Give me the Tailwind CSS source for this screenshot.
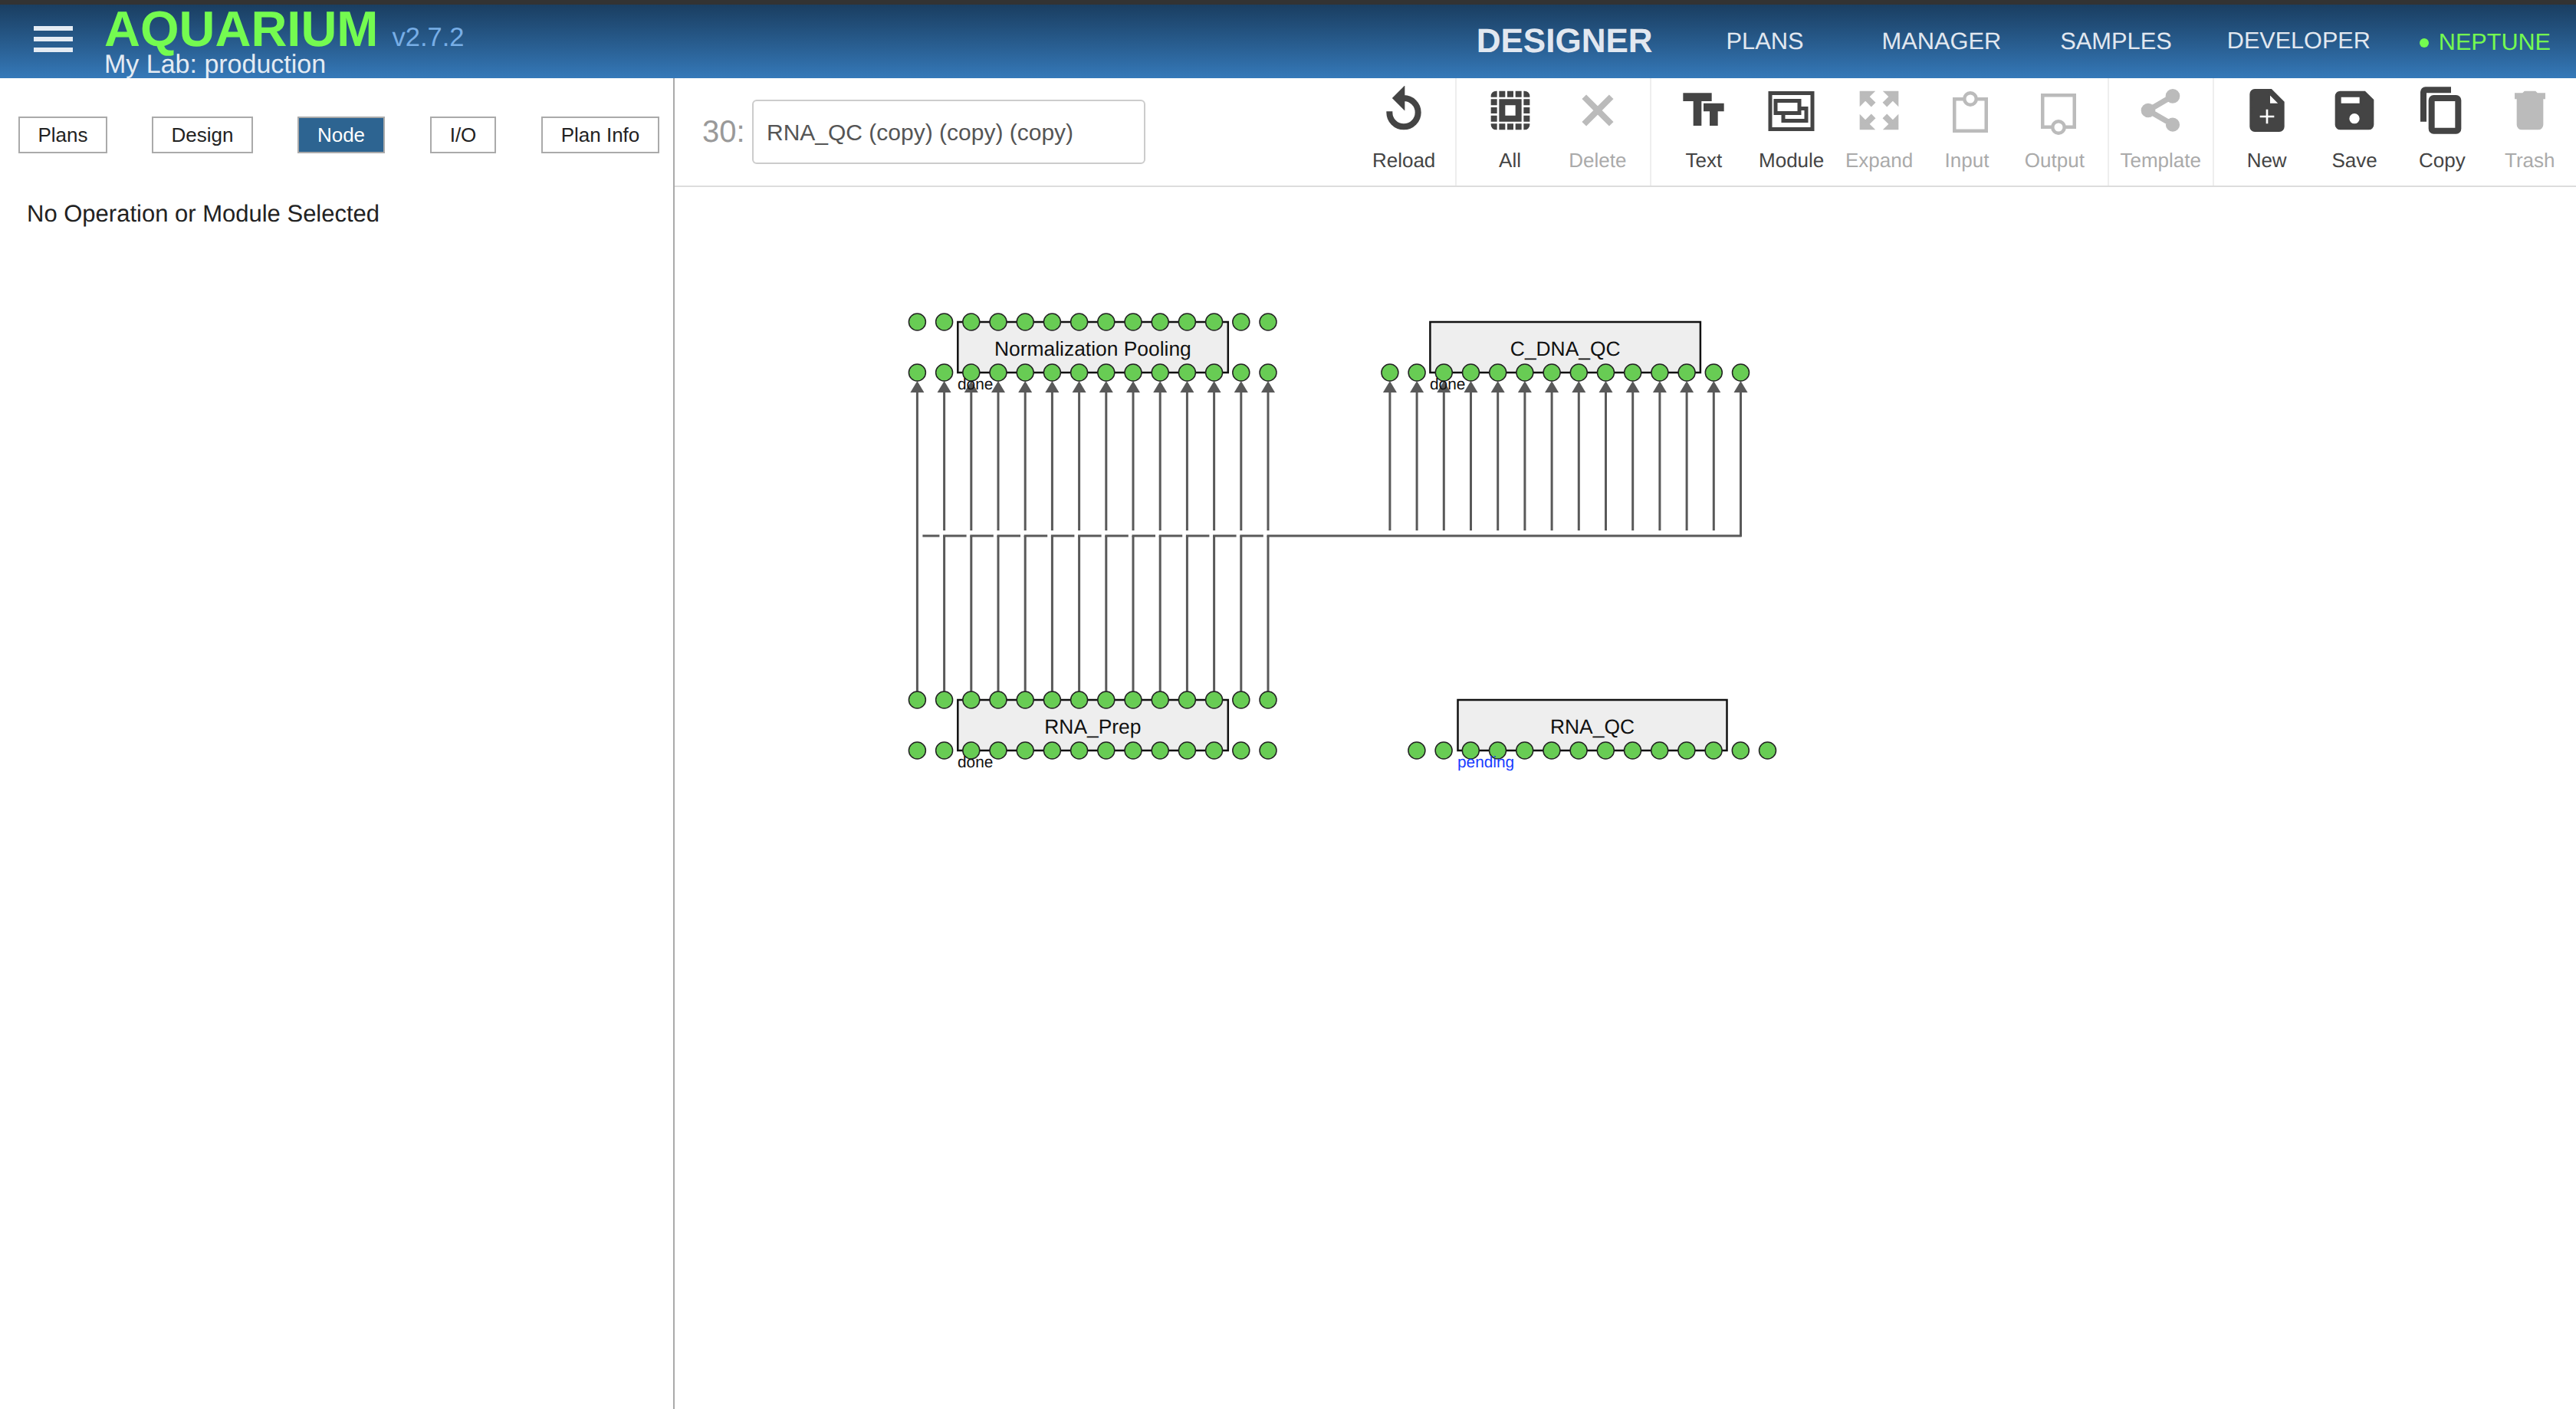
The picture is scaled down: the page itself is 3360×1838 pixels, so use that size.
<!DOCTYPE html>
<html lang="en">
<head>
    <meta charset="UTF-8">
    <meta name="viewport" content="width=device-width, initial-scale=1.0">
    <title>Aquarium - Designer</title>
    <script src="https://cdn.jsdelivr.net/npm/@tailwindcss/browser@4"></script>
</head>
<body class="bg-white h-screen overflow-hidden flex flex-col font-['Liberation_Sans',sans-serif] [text-rendering:geometricPrecision]">

    <!-- Top band -->
    <div class="h-[6px] bg-[#333333] shrink-0"></div>

    <!-- Navbar -->
    <nav class="h-[96px] shrink-0 flex items-center bg-linear-to-b from-[#1a3e61] to-[#3579b9] pr-[33px]">
        <div class="ml-[44px] w-[51px] flex flex-col gap-[8px] -mt-[6px]">
            <div class="h-[6px] bg-[#e4ebf3]"></div>
            <div class="h-[6px] bg-[#e4ebf3]"></div>
            <div class="h-[6px] bg-[#e4ebf3]"></div>
        </div>
        <div class="ml-[41px] flex flex-col -mt-[2px]">
            <div class="flex items-baseline h-[62px]">
                <span class="text-[65px] leading-[62px] font-bold text-[#74fb50]">AQUARIUM</span>
                <span class="ml-[18px] text-[34.5px] text-[#78aee6]">v2.7.2</span>
            </div>
            <div class="text-[34px] leading-[30px] text-[#e4ebf3]">My Lab: production</div>
        </div>
        <div class="ml-auto flex items-center text-[#e2e8f0]">
            <span class="text-[44px] font-bold">DESIGNER</span>
            <span class="ml-[96px] text-[30.8px]">PLANS</span>
            <span class="ml-[102px] text-[30.8px]">MANAGER</span>
            <span class="ml-[77px] text-[30.8px]">SAMPLES</span>
            <span class="ml-[72px] text-[30.6px]">DEVELOPER</span>
            <span class="ml-[64px] w-[12px] h-[12px] rounded-full bg-[#74fb50] mt-[3px]"></span>
            <span class="ml-[13px] text-[30.6px] text-[#74fb50] mt-[3px]">NEPTUNE</span>
        </div>
    </nav>

    <div class="flex-1 flex min-h-0">

        <!-- Left panel -->
        <div class="w-[880px] shrink-0 border-r-2 border-[#aaaaaa]">
            <div class="flex justify-between pl-[24px] pr-[18px] pt-[50px] text-[26px] text-[#222222]">
                <button class="w-[116px] h-[48px] border-2 border-[#aaaaaa] pt-[1px]">Plans</button>
                <button class="w-[132px] h-[48px] border-2 border-[#aaaaaa] pt-[1px] -ml-[1px]">Design</button>
                <button class="w-[114px] h-[48px] border-2 border-[#aaaaaa] pt-[1px] -ml-[1px] bg-[#2d6491] text-white">Node</button>
                <button class="w-[86px] h-[48px] border-2 border-[#aaaaaa] pt-[1px]">I/O</button>
                <button class="w-[154px] h-[48px] border-2 border-[#aaaaaa] pt-[1px]">Plan Info</button>
            </div>
            <p class="ml-[35px] mt-[60px] text-[31px] leading-[38px] text-[#222222]">No Operation or Module Selected</p>
        </div>

        <!-- Designer -->
        <div class="flex-1 flex flex-col min-w-0">

            <!-- Toolbar -->
            <div class="h-[142px] shrink-0 flex items-stretch border-b-2 border-[#dddddd]">
                <div class="flex-1 flex items-start pl-[36px] pt-[28px]">
                    <span class="w-[65px] text-[40px] leading-[84px] text-[#999999]">30:</span>
                    <input value="RNA_QC (copy) (copy) (copy)" class="w-[513px] h-[84px] border-2 border-[#cccccc] rounded-[6px] pl-[17px] pt-[2px] text-[30px] text-[#555555]">
                </div>

                <div class="flex pr-[10px] text-[26px] text-[#444444]">
                    <div class="w-[114.4px] flex flex-col items-center">
                        <svg class="w-[64px] h-[64px] mt-[10px]" viewBox="0 0 24 24" fill="#444444" stroke="#444444"><path d="M12 5V1L7 6l5 5V7c3.31 0 6 2.69 6 6s-2.69 6-6 6-6-2.69-6-6H4c0 4.42 3.58 8 8 8s8-3.58 8-8-3.58-8-8-8z"/></svg>
                        <span class="mt-[17px] leading-[32px]">Reload</span>
                    </div>
                </div>

                <div class="flex pl-[12px] pr-[11px] text-[26px] text-[#444444] border-l-2 border-[#eeeeee]">
                    <div class="w-[114.4px] flex flex-col items-center">
                        <svg class="w-[64px] h-[64px] mt-[10px]" viewBox="0 0 24 24" fill="#444444" stroke="#444444"><path d="M3 5h2V3c-1.1 0-2 .9-2 2zm0 8h2v-2H3v2zm4 8h2v-2H7v2zM3 9h2V7H3v2zm10-6h-2v2h2V3zm6 0v2h2c0-1.1-.9-2-2-2zM5 21v-2H3c0 1.1.9 2 2 2zm-2-4h2v-2H3v2zM9 3H7v2h2V3zm2 18h2v-2h-2v2zm8-8h2v-2h-2v2zm0 8c1.1 0 2-.9 2-2h-2v2zm0-12h2V7h-2v2zm0 8h2v-2h-2v2zm-4 4h2v-2h-2v2zm0-16h2V3h-2v2zM7 17h10V7H7v10zm2-8h6v6H9V9z"/></svg>
                        <span class="mt-[17px] leading-[32px]">All</span>
                    </div>
                    <div class="w-[114.4px] flex flex-col items-center text-[#aaaaaa]">
                        <svg class="w-[64px] h-[64px] mt-[10px]" viewBox="0 0 24 24" fill="#bbbbbb" stroke="#bbbbbb"><path d="M19 6.41L17.59 5 12 10.59 6.41 5 5 6.41 10.59 12 5 17.59 6.41 19 12 13.41 17.59 19 19 17.59 13.41 12z"/></svg>
                        <span class="mt-[17px] leading-[32px]">Delete</span>
                    </div>
                </div>

                <div class="flex pl-[11px] pr-[12px] text-[26px] text-[#444444] border-l-2 border-[#eeeeee]">
                    <div class="w-[114.4px] flex flex-col items-center">
                        <svg class="w-[64px] h-[64px] mt-[10px]" viewBox="0 0 24 24" fill="#444444" stroke="#444444"><path d="M2.5 4v3h5v12h3V7h5V4h-13zm19 5h-9v3h3v7h3v-7h3V9z"/></svg>
                        <span class="mt-[17px] leading-[32px]">Text</span>
                    </div>
                    <div class="w-[114.4px] flex flex-col items-center">
                        <svg class="w-[64px] h-[64px] mt-[10px]" viewBox="0 0 64 64" fill="none" stroke="#444444" stroke-width="5">
                            <rect x="4" y="9.5" width="55" height="47"/>
                            <rect x="21" y="29.5" width="30" height="16"/>
                            <rect x="11" y="19.5" width="31" height="16" fill="white"/>
                        </svg>
                        <span class="mt-[17px] leading-[32px]">Module</span>
                    </div>
                    <div class="w-[114.4px] flex flex-col items-center text-[#aaaaaa]">
                        <svg class="w-[64px] h-[64px] mt-[10px]" viewBox="0 0 24 24" fill="#bbbbbb" stroke="#bbbbbb"><path d="M15 3l2.3 2.3-2.89 2.87 1.42 1.42L18.7 6.7 21 9V3zM3 9l2.3-2.3 2.87 2.89 1.42-1.42L6.7 5.3 9 3H3zm6 12l-2.3-2.3 2.89-2.87-1.42-1.42L5.3 17.3 3 15v6zm12-6l-2.3 2.3-2.87-2.89-1.42 1.42 2.89 2.87L15 21h6z"/></svg>
                        <span class="mt-[17px] leading-[32px]">Expand</span>
                    </div>
                    <div class="w-[114.4px] flex flex-col items-center text-[#aaaaaa]">
                        <svg class="w-[64px] h-[64px] mt-[10px]" viewBox="0 0 64 64" fill="none" stroke="#bbbbbb" stroke-width="4.5">
                            <rect x="16.25" y="17.25" width="41.5" height="41.5"/>
                            <circle cx="37" cy="17" r="7.75" fill="white"/>
                        </svg>
                        <span class="mt-[17px] leading-[32px]">Input</span>
                    </div>
                    <div class="w-[114.4px] flex flex-col items-center text-[#aaaaaa]">
                        <svg class="w-[64px] h-[64px] mt-[10px]" viewBox="0 0 64 64" fill="none" stroke="#bbbbbb" stroke-width="4.5">
                            <rect x="16.25" y="12.25" width="41.5" height="41.5"/>
                            <circle cx="37" cy="54" r="7.75" fill="white"/>
                        </svg>
                        <span class="mt-[17px] leading-[32px]">Output</span>
                    </div>
                </div>

                <div class="flex pl-[10px] pr-[11px] text-[26px] text-[#aaaaaa] border-l-2 border-[#eeeeee]">
                    <div class="w-[114.4px] flex flex-col items-center">
                        <svg class="w-[64px] h-[64px] mt-[10px]" viewBox="0 0 24 24" fill="#bbbbbb" stroke="#bbbbbb"><path d="M18 16.08c-.76 0-1.44.3-1.96.77L8.91 12.7c.05-.23.09-.46.09-.7s-.04-.47-.09-.7l7.05-4.11c.54.5 1.25.81 2.04.81 1.66 0 3-1.34 3-3s-1.34-3-3-3-3 1.34-3 3c0 .24.04.47.09.7L8.04 9.81C7.5 9.31 6.79 9 6 9c-1.66 0-3 1.34-3 3s1.34 3 3 3c.79 0 1.5-.31 2.04-.81l7.12 4.16c-.05.21-.08.43-.08.65 0 1.61 1.31 2.92 2.92 2.92 1.61 0 2.92-1.31 2.92-2.92s-1.31-2.92-2.92-2.92z"/></svg>
                        <span class="mt-[17px] leading-[32px]">Template</span>
                    </div>
                </div>

                <div class="flex pl-[11px] pr-[3px] text-[26px] text-[#444444] border-l-2 border-[#eeeeee]">
                    <div class="w-[114.4px] flex flex-col items-center">
                        <svg class="w-[64px] h-[64px] mt-[10px]" viewBox="0 0 24 24" fill="#444444" stroke="#444444"><path d="M14 2H6c-1.1 0-1.99.9-1.99 2L4 20c0 1.1.89 2 1.99 2H18c1.1 0 2-.9 2-2V8l-6-6zm2 14h-3v3h-2v-3H8v-2h3v-3h2v3h3v2zm-3-7V3.5L18.5 9H13z"/></svg>
                        <span class="mt-[17px] leading-[32px]">New</span>
                    </div>
                    <div class="w-[114.4px] flex flex-col items-center">
                        <svg class="w-[64px] h-[64px] mt-[10px]" viewBox="0 0 24 24" fill="#444444" stroke="#444444"><path d="M17 3H5c-1.11 0-2 .9-2 2v14c0 1.1.89 2 2 2h14c1.1 0 2-.9 2-2V7l-4-4zm-5 16c-1.66 0-3-1.34-3-3s1.34-3 3-3 3 1.34 3 3-1.34 3-3 3zm3-10H5V5h10v4z"/></svg>
                        <span class="mt-[17px] leading-[32px]">Save</span>
                    </div>
                    <div class="w-[114.4px] flex flex-col items-center">
                        <svg class="w-[64px] h-[64px] mt-[10px]" viewBox="0 0 24 24" fill="#444444" stroke="#444444"><path d="M16 1H4c-1.1 0-2 .9-2 2v14h2V3h12V1zm3 4H8c-1.1 0-2 .9-2 2v14c0 1.1.9 2 2 2h11c1.1 0 2-.9 2-2V7c0-1.1-.9-2-2-2zm0 16H8V7h11v14z"/></svg>
                        <span class="mt-[17px] leading-[32px]">Copy</span>
                    </div>
                    <div class="w-[114.4px] flex flex-col items-center text-[#aaaaaa]">
                        <svg class="w-[64px] h-[64px] mt-[10px]" viewBox="0 0 24 24" fill="#bbbbbb" stroke="#bbbbbb"><path d="M6 19c0 1.1.9 2 2 2h8c1.1 0 2-.9 2-2V7H6v12zM19 4h-3.5l-1-1h-5l-1 1H5v2h14V4z"/></svg>
                        <span class="mt-[17px] leading-[32px]">Trash</span>
                    </div>
                </div>
            </div>

            <!-- Plan canvas, viewBox is in page pixels -->
            <svg id="canvas" class="flex-1 w-full min-h-0" viewBox="880 244 2480 1594" preserveAspectRatio="xMinYMin"></svg>
        </div>
    </div>

    <script>
        const STEP = 35.2;
        const EDGE = "#595959";
        const rows = x0 => Array.from({ length: 14 }, (_, i) => x0 + i * STEP);

        const topX = rows(1196.4);
        const cdnaX = rows(1812.9);
        const qcX = rows(1847.9);

        let out = "";

        function line(x1, y1, x2, y2) {
            out += `<line x1="${x1}" y1="${y1}" x2="${x2}" y2="${y2}" stroke="${EDGE}" stroke-width="3"/>`;
        }

        function arrow(x) {
            out += `<polygon points="${x},497 ${x - 9},512 ${x + 9},512" fill="${EDGE}"/>`;
        }

        function box(x, y, w, h, label, labelX, baseline) {
            out += `<rect x="${x}" y="${y}" width="${w}" height="${h}" fill="#eeeeee" stroke="#111111" stroke-width="2.5"/>`;
            out += `<text x="${labelX}" y="${baseline}" font-size="26.4" text-anchor="middle" fill="#111111">${label}</text>`;
        }

        function dots(xs, y) {
            xs.forEach(x => {
                out += `<circle cx="${x}" cy="${y}" r="11" fill="#68cc54" stroke="#222222" stroke-width="1.5"/>`;
            });
        }

        function status(x, y, text, color) {
            out += `<text x="${x}" y="${y}" font-size="20.8" fill="${color}">${text}</text>`;
        }

        // wires from RNA_Prep up to the two upper operations
        topX.forEach((x, i) => {
            arrow(x);
            if (i === 0) {
                line(x, 512, x, 913);
                line(x + 7, 699, x + 29, 699);
            } else {
                line(x, 512, x, 692);
                line(x, 913, x, 699);
                line(x - 1.5, 699, i === 13 ? 2271.6 : x + 29, 699);
            }
        });
        cdnaX.forEach((x, i) => {
            arrow(x);
            line(x, 512, x, i === 13 ? 700 : 692);
        });

        box(1249.3, 420, 352.5, 66, "Normalization Pooling", 1425.4, 464);
        box(1249.3, 913, 352.5, 66, "RNA_Prep", 1425.4, 957);
        box(1865.4, 420, 352.5, 66, "C_DNA_QC", 2041.7, 464);
        box(1901.5, 913, 351, 66, "RNA_QC", 2077, 957);

        dots(topX, 420);
        dots(topX, 486);
        dots(topX, 913);
        dots(topX, 979);
        dots(cdnaX, 486);
        dots(qcX, 979);

        status(1249, 508, "done", "#111111");
        status(1865, 508, "done", "#111111");
        status(1249, 1001, "done", "#111111");
        status(1901, 1001, "pending", "#1a3cff");

        document.getElementById("canvas").innerHTML = out;
    </script>

</body>
</html>
